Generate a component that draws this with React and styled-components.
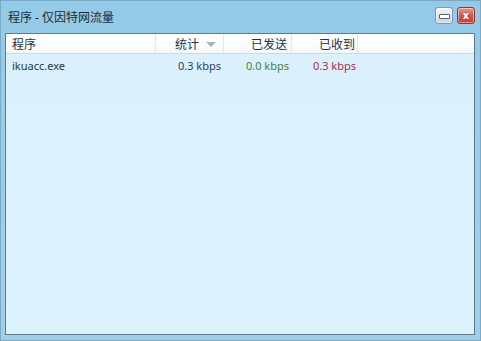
import React from 'react';
import styled, { createGlobalStyle } from 'styled-components';

const Global = createGlobalStyle`
  html, body { margin: 0; padding: 0; }
  body {
    width: 481px;
    height: 341px;
    overflow: hidden;
    font-family: "Noto Sans", "Noto Sans CJK SC", sans-serif;
    font-size: 12px;
  }
`;

const Frame = styled.div`
  width: 481px;
  height: 341px;
  box-sizing: border-box;
  background: linear-gradient(#93cae7, #9dcde8 40%, #a3cde6);
  border: 1px solid #7ba9c6;
  display: flex;
  flex-direction: column;
  padding: 0 5px 5px 4px;
`;

const TitleBar = styled.div`
  height: 32px;
  display: flex;
  align-items: center;
  justify-content: space-between;
  padding: 0 3px 2px 3px;
  box-sizing: border-box;
`;

const Title = styled.div`
  color: #1f2b36;
  font-size: 12px;
  margin-top: 1px;
`;

const Buttons = styled.div`
  display: flex;
  gap: 4px;
  margin-top: -2px;
  margin-right: -3px;
`;

const WinButton = styled.div`
  width: 16px;
  height: 15px;
  border-radius: 3px;
  border: 1px solid ${p => (p.close ? '#8c3a36' : '#7f98ad')};
  background: ${p =>
    p.close
      ? 'linear-gradient(#e59a8e, #c75a4e 50%, #b94538)'
      : 'linear-gradient(#f6f9fc, #d8e4ef 50%, #c8d8e6)'};
  display: flex;
  align-items: center;
  justify-content: center;
  color: #fff;
  font-size: 10px;
  font-weight: bold;
  line-height: 1;
  box-shadow: inset 0 0 0 1px rgba(255, 255, 255, 0.45);
`;

const Dash = styled.div`
  width: 9px;
  height: 3px;
  border: 1px solid #4e6479;
  background: #fff;
  border-radius: 1px;
  margin-top: 3px;
`;

const Panel = styled.div`
  flex: 1;
  border: 1px solid #5f7a90;
  background: linear-gradient(#daf1fd, #dcf3fe);
  display: flex;
  flex-direction: column;
`;

const Row = styled.div`
  display: grid;
  grid-template-columns: 150px 68px 68px 66px 1fr;
  height: ${p => (p.head ? '19px' : '23px')};
  align-items: center;
  background: ${p => (p.head ? 'linear-gradient(#ffffff, #fbfdfe 60%, #f3f7f9)' : 'transparent')};
  border-bottom: ${p => (p.head ? '1px solid #d2dbe1' : 'none')};
`;

const Cell = styled.div`
  height: 100%;
  display: flex;
  align-items: center;
  justify-content: ${p => (p.left ? 'flex-start' : 'flex-end')};
  padding: ${p => (p.left ? '0 0 0 6px' : `0 ${p.pr || 4}px 0 0`)};
  box-sizing: border-box;
  color: ${p => p.color || '#1e3348'};
  font-size: ${p => (p.small ? '11px' : '12px')};
  border-right: ${p => (p.sep ? '1px solid #e2e8ec' : 'none')};
  white-space: nowrap;
`;

const Arrow = styled.span`
  display: inline-block;
  width: 0;
  height: 0;
  border-left: 5px solid transparent;
  border-right: 5px solid transparent;
  border-top: 5px solid #a8b2ba;
  margin-left: 7px;
  margin-top: 1px;
`;

export default function App() {
  return (
    <>
      <Global />
      <Frame>
        <TitleBar>
          <Title>程序 - 仅因特网流量</Title>
          <Buttons>
            <WinButton><Dash /></WinButton>
            <WinButton close>x</WinButton>
          </Buttons>
        </TitleBar>
        <Panel>
          <Row head>
            <Cell left sep>程序</Cell>
            <Cell sep pr={7}>统计<Arrow /></Cell>
            <Cell sep pr={4}>已发送</Cell>
            <Cell sep pr={2}>已收到</Cell>
            <Cell />
          </Row>
          <Row>
            <Cell left small color="#22384e">ikuacc.exe</Cell>
            <Cell small pr={3} color="#2a4460">0.3 kbps</Cell>
            <Cell small pr={3} color="#4a7f4c">0.0 kbps</Cell>
            <Cell small pr={2} color="#a3304a">0.3 kbps</Cell>
            <Cell />
          </Row>
        </Panel>
      </Frame>
    </>
  );
}
